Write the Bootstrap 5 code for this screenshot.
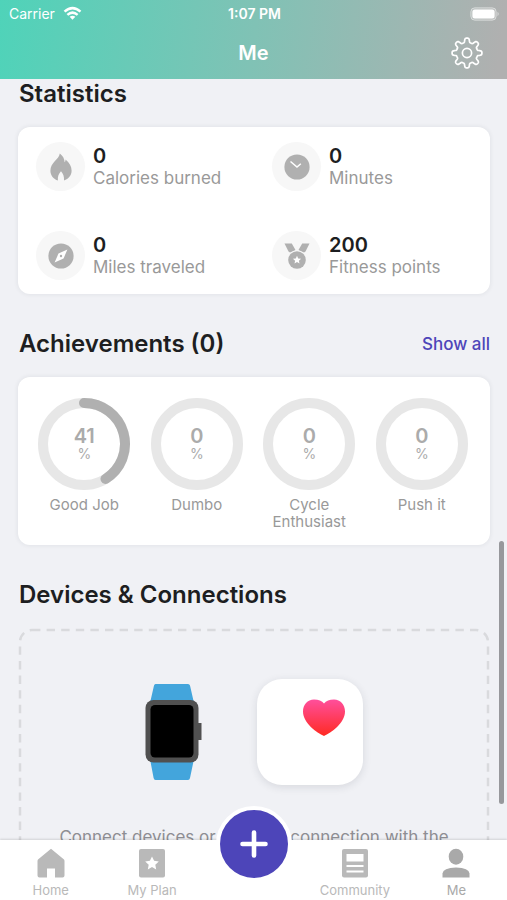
<!DOCTYPE html>
<html lang="en">
<head>
<meta charset="utf-8">
<meta name="viewport" content="width=device-width, initial-scale=1">
<title>Me</title>
<link href="https://cdn.jsdelivr.net/npm/bootstrap@5.3.0/dist/css/bootstrap.min.css" rel="stylesheet">
<style>
  body { font-family: Inter, "Liberation Sans", sans-serif; background: #f0f1f5; color: #1d1e21; }
  .app-head { background: linear-gradient(97deg, #4fd3b9 0%, #80c2b5 50%, #b0b0b0 98%); padding-bottom: 6px; }
  .status-line { height: 27px; padding: 0 7px 0 9px; font-size: 14px; line-height: 27px; }
  .status-line > *, .title-line > * { flex: 1 1 0; }
  .title-line { height: 46px; padding: 6px 23px 0; }
  .title-line h1 { font-size: 20px; line-height: 40px; }
  .page-body { padding: 0 17px 0 18px; }
  .section-title { font-size: 24px; line-height: 30px; font-weight: 600; margin: 0; padding-left: 1px; }
  .panel { background: #fff; border-radius: 12px; box-shadow: 0 0 5px rgba(30,40,60,.09); margin: 18px 0 35px; }
  .panel-stats { padding: 15px 0 14px; row-gap: 40px; }
  .stat { padding-left: 18px; gap: 8px; }
  .stat-icon { width: 49px; height: 49px; background: #f7f7f7; }
  .stat-num { font-size: 20px; line-height: 22px; font-weight: 600; padding-top: 1px; }
  .stat-name { font-size: 17px; line-height: 22px; color: #999; }
  .show-all { font-size: 17px; line-height: 30px; color: #4d45b9; font-weight: 500; }
  .panel-rings { padding: 20px 12px 15px 10px; }
  .ring { width: 94px; height: 94px; }
  .ring-text { color: #ababab; font-size: 14px; line-height: 16px; }
  .ring-num { font-size: 20px; line-height: 20px; font-weight: 600; }
  .ring-name { color: #999; font-size: 15px; line-height: 17px; margin-top: 5px; }
  .dash-box { margin-top: 18px; padding: 51px 40px 40px; }
  .dash-box .frame rect { x: 2px; y: 2px; width: calc(100% - 4px); height: calc(100% - 4px); }
  .health { width: 106px; height: 106px; border-radius: 25px; background: #fff; box-shadow: 0 2px 9px rgba(30,40,60,.12); }
  .connect-text { font-size: 17px; line-height: 24px; color: #8e8e93; margin-top: 40px; }
  .scroll-thumb { right: 3px; bottom: 96px; width: 5px; height: 263px; background: #97989c; }
  .tabs { background: #fff; height: 60px; box-shadow: 0 -1px 2px rgba(0,0,0,.13); }
  .tab-item { flex: 1 1 0; color: #b9b9b9; font-size: 13px; line-height: 16px; padding-top: 8px; gap: 4px; }
  .tab-item.is-on { color: #a9a9a9; }
  .add-btn { width: 76px; height: 76px; margin-top: -34px; border: 4px solid #fff; background: #4d45b9; }
</style>
<script src="https://cdn.jsdelivr.net/npm/bootstrap@5.3.0/dist/js/bootstrap.bundle.min.js"></script>
</head>
<body class="vh-100 d-flex flex-column overflow-hidden">
<header class="app-head text-white">
  <div class="status-line d-flex align-items-center">
    <div class="d-flex align-items-center gap-2">
      <span>Carrier</span>
      <svg width="19" height="15" viewBox="0 0 20 15" fill="none" stroke="#fff" stroke-width="2.6" aria-hidden="true"><path d="M1.600 5.600Q10-2 18.400 5.600M4.600 9Q10 4.200 15.400 9"/><path d="M10 14 7 11Q10 8.600 13 11Z" fill="#fff" stroke="none"/></svg>
    </div>
    <div class="text-center fw-semibold">1:07 PM</div>
    <div class="d-flex justify-content-end">
      <svg width="30" height="14" viewBox="0 0 30 14" aria-hidden="true"><rect x=".8" y=".8" width="25.400" height="12.400" rx="4" fill="#fff" fill-opacity=".2" stroke="#fff" stroke-opacity=".45"/><rect x="2.400" y="2.400" width="22.200" height="9.200" rx="2.500" fill="#fff"/><path d="M27.500 4.800Q30 7 27.500 9.200Z" fill="#fff" fill-opacity=".5"/></svg>
    </div>
  </div>
  <div class="title-line d-flex align-items-center">
    <span></span>
    <h1 class="text-center fw-semibold m-0">Me</h1>
    <div class="d-flex justify-content-end">
      <button class="btn p-0 border-0 d-flex" aria-label="Settings">
        <svg width="34" height="34" viewBox="-17 -17 34 34" fill="none" stroke="#fff" stroke-width="1.700" stroke-linejoin="round"><circle r="4.600"/><path id="gear"/></svg>
      </button>
    </div>
  </div>
</header>

<main class="page-body flex-grow-1 overflow-hidden">
  <h2 class="section-title">Statistics</h2>
  <section class="panel panel-stats row g-0 mx-0">
    <div class="col-6 stat d-flex align-items-center">
      <div class="stat-icon rounded-circle d-flex align-items-center justify-content-center">
        <svg width="24" height="28" viewBox="0 0 24 28" fill="#b0b0b0"><path d="M10.800.5C14 3 15.600 6 15.600 9.300 16.300 8.600 16.500 7.800 16.500 6.500 20.500 9.700 22.600 13.400 22.600 17.700 22.600 22.500 19.500 25.800 15 27.500 15.300 23.500 14.200 20.800 12 18.300 9.700 20.800 8.500 23.500 8.900 27.500 4.500 26 1.400 22.500 1.400 17.700 1.400 13.800 3.300 11 5.500 8.500 8 5.500 10.300 4 10.800.5Z"/></svg>
      </div>
      <div><div class="stat-num">0</div><div class="stat-name">Calories burned</div></div>
    </div>
    <div class="col-6 stat d-flex align-items-center">
      <div class="stat-icon rounded-circle d-flex align-items-center justify-content-center">
        <svg width="26" height="26" viewBox="0 0 26 26"><circle cx="13" cy="13" r="12.600" fill="#b0b0b0"/><path d="M6.500 7.500 13 13 16.800 9.800" fill="none" stroke="#fff" stroke-width="1.500"/></svg>
      </div>
      <div><div class="stat-num">0</div><div class="stat-name">Minutes</div></div>
    </div>
    <div class="col-6 stat d-flex align-items-center">
      <div class="stat-icon rounded-circle d-flex align-items-center justify-content-center">
        <svg width="26" height="26" viewBox="0 0 26 26"><circle cx="13" cy="13" r="12.600" fill="#b0b0b0"/><path d="M19.400 6.600 15.500 15.500 6.600 19.400 10.500 10.500Z" fill="#fff"/><circle cx="13" cy="13" r="1.200" fill="#b0b0b0"/></svg>
      </div>
      <div><div class="stat-num">0</div><div class="stat-name">Miles traveled</div></div>
    </div>
    <div class="col-6 stat d-flex align-items-center">
      <div class="stat-icon rounded-circle d-flex align-items-center justify-content-center">
        <svg width="26" height="26" viewBox="0 0 26 26" fill="#b0b0b0"><path d="M.5.5H7.800L11.500 7 6 9.500 4.500 8.500ZM25.500.5H18.200L14.500 7 20 9.500 21.500 8.500Z"/><circle cx="13" cy="17" r="9.600" fill="#f7f7f7"/><circle cx="13" cy="17" r="8.800"/><path fill="#fff" d="M13 12.800 14.200 15.500 17.100 15.800 14.900 17.700 15.500 20.600 13 19.100 10.500 20.600 11.100 17.700 8.900 15.800 11.800 15.500Z"/></svg>
      </div>
      <div><div class="stat-num">200</div><div class="stat-name">Fitness points</div></div>
    </div>
  </section>

  <div class="d-flex justify-content-between">
    <h2 class="section-title">Achievements (0)</h2>
    <a href="#" class="show-all text-decoration-none">Show all</a>
  </div>
  <section class="panel panel-rings row g-0 mx-0 text-center">
    <div class="col-3">
      <div class="ring position-relative mx-auto d-flex flex-column align-items-center justify-content-center">
        <svg class="position-absolute top-0 start-0" width="94" height="94" viewBox="0 0 94 94" fill="none" stroke-width="10"><circle cx="47" cy="47" r="41" stroke="#e7e7e7"/><path d="M47 6A41 41 0 0 1 68.500 81.900" stroke="#b0b0b0" stroke-linecap="round"/></svg>
        <div class="ring-text"><div class="ring-num">41</div>%</div>
      </div>
      <div class="ring-name">Good Job</div>
    </div>
    <div class="col-3">
      <div class="ring position-relative mx-auto d-flex flex-column align-items-center justify-content-center">
        <svg class="position-absolute top-0 start-0" width="94" height="94" viewBox="0 0 94 94" fill="none" stroke-width="10"><circle cx="47" cy="47" r="41" stroke="#e7e7e7"/></svg>
        <div class="ring-text"><div class="ring-num">0</div>%</div>
      </div>
      <div class="ring-name">Dumbo</div>
    </div>
    <div class="col-3">
      <div class="ring position-relative mx-auto d-flex flex-column align-items-center justify-content-center">
        <svg class="position-absolute top-0 start-0" width="94" height="94" viewBox="0 0 94 94" fill="none" stroke-width="10"><circle cx="47" cy="47" r="41" stroke="#e7e7e7"/></svg>
        <div class="ring-text"><div class="ring-num">0</div>%</div>
      </div>
      <div class="ring-name">Cycle<br>Enthusiast</div>
    </div>
    <div class="col-3">
      <div class="ring position-relative mx-auto d-flex flex-column align-items-center justify-content-center">
        <svg class="position-absolute top-0 start-0" width="94" height="94" viewBox="0 0 94 94" fill="none" stroke-width="10"><circle cx="47" cy="47" r="41" stroke="#e7e7e7"/></svg>
        <div class="ring-text"><div class="ring-num">0</div>%</div>
      </div>
      <div class="ring-name">Push it</div>
    </div>
  </section>

  <h2 class="section-title">Devices &amp; Connections</h2>
  <section class="dash-box position-relative text-center">
    <svg class="frame position-absolute top-0 start-0 w-100 h-100" fill="none" stroke="#d9dadd" stroke-width="2.500" stroke-dasharray="8.400 6.200" aria-hidden="true"><rect rx="12"/></svg>
    <div class="d-flex justify-content-center align-items-center gap-5">
      <svg width="64" height="98" viewBox="1 0 64 98" aria-hidden="true"><path d="M11.500 1H44Q45.500 1 46 2.500L50 20H6L10 2.500Q10.400 1 11.500 1ZM6 76H50L46 95Q45.600 97 44 97H11.500Q10 97 9.600 95Z" fill="#43a5dc"/><rect x="52" y="40" width="5.500" height="17" fill="#505050"/><rect x="1.500" y="17" width="53" height="62.500" rx="8" fill="#505050"/><rect x="6.500" y="22" width="43" height="52.500" rx="4.500" fill="#000"/></svg>
      <div class="health d-flex justify-content-end align-items-start p-3">
        <svg width="46" height="44" viewBox="0 0 46 44" aria-hidden="true"><defs><linearGradient id="hg" x2="0" y2="1"><stop stop-color="#ff4f9c"/><stop offset="1" stop-color="#ff2a22"/></linearGradient></defs><path d="M23 41C16 38 2 28 2 16.500 2 9.500 6.500 4.500 13 4.500 17.500 4.500 21 6 23 8.500 25 6 28.500 4.500 33 4.500 39.500 4.500 44 9.500 44 16.500 44 28 30 38 23 41Z" fill="url(#hg)"/></svg>
      </div>
    </div>
    <p class="connect-text mb-0">Connect devices or create a connection with the Health app</p>
  </section>
</main>
<div class="scroll-thumb position-fixed rounded-pill"></div>

<nav class="tabs d-flex flex-shrink-0 position-relative">
  <a href="#" class="tab-item d-flex flex-column align-items-center text-decoration-none">
    <svg width="30" height="30" viewBox="0 0 30 30" fill="currentColor"><path d="M15 .8 28 11.500Q28.500 12 28.500 13V27.500Q28.500 29.500 26.500 29.500H19V20.500H11V29.500H3.500Q1.500 29.500 1.500 27.500V13Q1.500 12 2 11.500Z"/></svg>
    Home</a>
  <a href="#" class="tab-item d-flex flex-column align-items-center text-decoration-none">
    <svg width="30" height="30" viewBox="0 0 30 30"><rect x="2" y="1" width="26" height="28.500" rx="2" fill="currentColor"/><path fill="#fff" d="M15 8.500 17.100 12.800 21.800 13.400 18.300 16.700 19.200 21.400 15 19.100 10.800 21.400 11.700 16.700 8.200 13.400 12.900 12.800Z"/></svg>
    My Plan</a>
  <div class="tab-item d-flex justify-content-center p-0">
    <button class="add-btn btn rounded-circle p-0 d-flex align-items-center justify-content-center flex-shrink-0" aria-label="Add">
      <svg width="30" height="30" viewBox="0 0 30 30" stroke="#fff" stroke-width="4.600" stroke-linecap="round"><path d="M15 3.500V26.500M3.500 15H26.500"/></svg>
    </button>
  </div>
  <a href="#" class="tab-item d-flex flex-column align-items-center text-decoration-none">
    <svg width="30" height="30" viewBox="0 0 30 30"><rect x="2" y="1" width="26" height="28.500" rx="2" fill="currentColor"/><path fill="#fff" d="M6.500 6H23.500V13.500H6.500ZM6.500 17H23.500V19H6.500ZM6.500 22.500H23.500V24.500H6.500Z"/></svg>
    Community</a>
  <a href="#" class="tab-item is-on d-flex flex-column align-items-center text-decoration-none" aria-current="page">
    <svg width="30" height="30" viewBox="0 0 30 30" fill="currentColor"><ellipse cx="15" cy="8.700" rx="7.300" ry="8"/><path d="M1.500 29.500V25.500Q2 20 15 19.500 28 20 28.500 25.500V29.500Z"/></svg>
    Me</a>
</nav>
<script>
  // Eight-tooth gear outline: smooth rise and fall between root and tip radius
  const pts = [];
  for (let i = 0; i < 240; i++) {
    const a = i / 240 * Math.PI * 2 - Math.PI / 2;
    const c = Math.cos(8 * (a + Math.PI / 2));
    const r = 12.8 + 2.2 * Math.tanh(2.2 * (c - 0.1));
    pts.push((r * Math.cos(a)).toFixed(2) + ' ' + (r * Math.sin(a)).toFixed(2));
  }
  document.getElementById('gear').setAttribute('d', 'M' + pts.join('L') + 'Z');
</script>
</body>
</html>
